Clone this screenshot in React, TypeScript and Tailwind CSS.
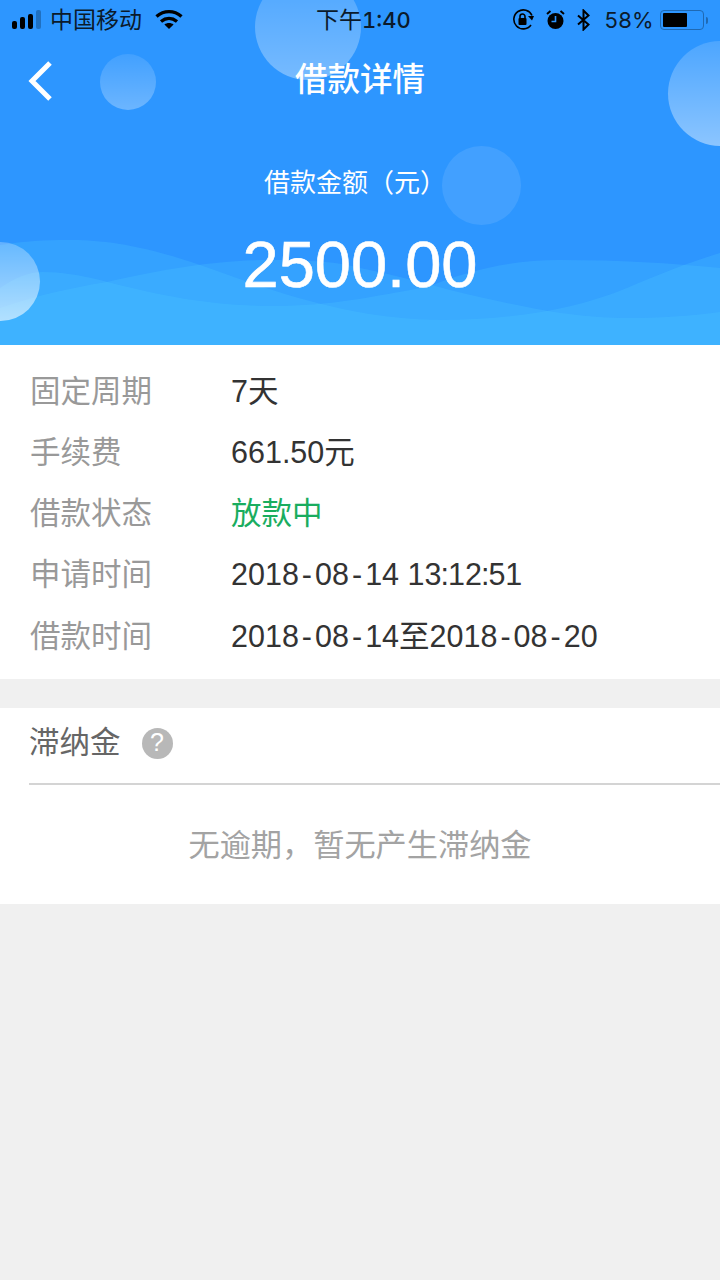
import React from 'react';

const cjk = '"Liberation Sans","Noto Sans CJK SC",sans-serif';

const rows: { label: string; value: string }[] = [
  { label: '固定周期', value: '7天' },
  { label: '手续费', value: '661.50元' },
  { label: '借款状态', value: '放款中' },
  { label: '申请时间', value: '2018-08-14 13:12:51' },
  { label: '借款时间', value: '2018-08-14至2018-08-20' },
];

// the hyphens are wider and the colons tighter than in Liberation
const Value = ({ text }: { text: string }) => (
  <>
    {text.split(/([-:])/).map((part, i) => {
      if (part === '-') return <span key={i} className="mx-[3px]">-</span>;
      if (part === ':') return <span key={i} className="-mx-[1px]">:</span>;
      return part;
    })}
  </>
);

const Bubble = ({ className }: { className: string }) => (
  <div className={`absolute rounded-full bg-gradient-to-b ${className}`} />
);

const StatusBar = () => (
  <div className="relative flex h-[40px] items-center justify-between pl-[12px] pr-[12px] text-[23px] text-[#0b1a2b]">
    <div className="flex items-center">
      <div className="flex items-end gap-[3px] pb-[1px]">
        <span className="h-[8px] w-[5px] rounded-[2px] bg-black" />
        <span className="h-[12px] w-[5px] rounded-[2px] bg-black" />
        <span className="h-[15px] w-[5px] rounded-[2px] bg-black" />
        <span className="h-[19px] w-[5px] rounded-[2px] bg-[#2070c0]" />
      </div>
      <span className="ml-[9px]">中国移动</span>
      <svg className="ml-[13px] mb-[2px]" width="28" height="20" viewBox="0 0 28 20" fill="none" stroke="black" strokeWidth="3.4">
        <path d="M1.5 7.5C9 1 19 1 26.5 7.5" />
        <path d="M6 12.5C11 8.5 17 8.5 22 12.5" />
        <path d="M14 20L9.4 15.6C12 13.6 16 13.6 18.6 15.6Z" fill="black" stroke="none" />
      </svg>
    </div>
    <span className="absolute left-[316px] top-[6px] leading-[28px]">
      下午<span className="font-['Inter'] text-[22px] font-medium tabular-nums">1:40</span>
    </span>
    <div className="flex items-center">
      <svg width="22" height="22" viewBox="0 0 22 22" fill="none" stroke="black" strokeWidth="1.6">
        <path d="M20 6.5A9.5 9.5 0 1 0 19 16" />
        <path d="M16 7L22 7L20 11.5Z" fill="black" stroke="none" />
        <rect x="6.5" y="9" width="8" height="7" rx="1" fill="black" stroke="none" />
        <path d="M8 9V7.5a2.5 2.5 0 0 1 5 0V9" />
      </svg>
      <svg className="ml-[12px]" width="19" height="20" viewBox="0 0 19 20">
        <circle cx="9.5" cy="11" r="8" fill="black" />
        <path d="M9.5 6V11.5H5.5" stroke="#2d96ff" strokeWidth="1.6" fill="none" />
        <path d="M1 4L4.5 1M18 4L14.5 1" stroke="black" strokeWidth="2" />
      </svg>
      <svg className="ml-[12px]" width="13" height="22" viewBox="0 0 13 22" fill="none" stroke="black" strokeWidth="2">
        <path d="M1 6.5L11.5 15.5L6.5 20.5V1.5L11.5 6.5L1 15.5" />
      </svg>
      <span className="ml-[15px] font-['Inter'] text-[22px] tracking-[0.3px]">58%</span>
      <div className="ml-[6px] flex h-[20px] w-[44px] items-center rounded-[4px] border border-[#1f69b3] p-[2px]">
        <div className="h-full w-[24px] rounded-[1px] bg-black" />
      </div>
      <div className="ml-[2px] h-[7px] w-[2px] rounded-r-full bg-[#1f69b3]" />
    </div>
  </div>
);

export default function App() {
  return (
    <div className="flex min-h-[1280px] flex-col bg-[#f0f0f0]" style={{ fontFamily: cjk }}>
      <div className="relative h-[345px] overflow-hidden bg-[#2d96ff] text-white">
        <Bubble className="left-[255px] top-[-26px] h-[106px] w-[106px] from-white/15 to-white/35" />
        <Bubble className="left-[100px] top-[54px] h-[56px] w-[56px] from-white/10 to-white/30" />
        <Bubble className="left-[668px] top-[41px] h-[105px] w-[105px] from-white/15 to-white/45" />
        <Bubble className="left-[442px] top-[146px] h-[79px] w-[79px] from-white/10 to-white/10" />
        <svg className="absolute inset-x-0 bottom-0" width="720" height="115" viewBox="0 230 720 115" fill="#50d2ff" fillOpacity="0.21">
          <path d="M0 245C25 241 45 240 67 240C100 240 135 243 200 265C270 290 350 320 443 320C500 320 570 312 627 288C660 274 690 262 720 253V345H0Z" />
          <path d="M0 288C15 278 28 272 43 272C60 272 80 275 100 280C160 296 210 306 275 306C330 306 370 297 427 287C470 270 510 260 560 260C620 260 670 263 720 268V345H0Z" />
          <path d="M0 308C35 296 70 288 107 282C150 272 210 260 267 260C310 260 340 262 360 268C390 274 420 282 450 290C490 300 530 308 560 313C590 317 610 318 627 318C660 318 690 316 720 312V345H0Z" />
        </svg>
        <Bubble className="left-[-39px] top-[242px] h-[79px] w-[79px] from-white/25 to-white/60" />
        <div className="relative">
          <StatusBar />
          <div className="relative flex h-[80px] items-center justify-center text-[32.5px] font-medium">
            <svg className="absolute left-[27px] top-[20px]" width="26" height="42" viewBox="0 0 26 42" fill="none" stroke="white" strokeWidth="5">
              <path d="M23 3L5 21L23 39" />
            </svg>
            借款详情
          </div>
          <div className="mt-[41px] flex flex-col items-center">
            <div className="pr-[10px] text-[26px] leading-[44px]">借款金额（元）</div>
            <div className="mt-[24px] text-[65px] leading-[72px] [-webkit-text-stroke:0.6px_white]">2500.00</div>
          </div>
        </div>
      </div>

      <div className="flex h-[334px] flex-col justify-center bg-white pl-[30px] pt-[4px] text-[30.5px]">
        {rows.map((row) => (
          <div key={row.label} className="flex h-[61.25px] items-center">
            <div className="w-[201px] text-[#999999]">{row.label}</div>
            <div className={row.value === '放款中' ? 'text-[#1aad5f]' : 'text-[#333333]'}>
              <Value text={row.value} />
            </div>
          </div>
        ))}
      </div>

      <div className="mt-[29px] h-[196px] bg-white">
        <div className="ml-[29px] flex h-[77px] items-center border-b-[2px] border-[#d4d4d4] pb-[5px] text-[30.5px] text-[#666666]">
          滞纳金
          <span className="ml-[21px] flex h-[31px] w-[31px] items-center justify-center rounded-full bg-[#b8b8b8] text-[25px] font-medium text-white">?</span>
        </div>
        <div className="flex h-[119px] items-center justify-center pt-[3px] text-[31.2px] text-[#a3a3a3]">无逾期，暂无产生滞纳金</div>
      </div>
    </div>
  );
}
